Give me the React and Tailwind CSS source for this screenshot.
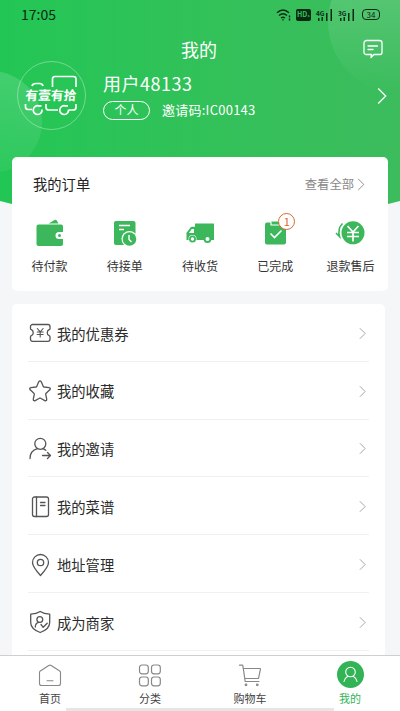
import React from 'react';

const icon = {
  fill: 'none',
  stroke: 'currentColor',
  strokeWidth: 1.3,
  strokeLinecap: 'round',
  strokeLinejoin: 'round',
};

const WalletIcon = () => (
  <svg width="28" height="28" viewBox="0 0 28 28" fill="#3cb75b">
    <path d="M12.500 4.500 19 .8q1-.5 1.600.5l1.900 3.200z" />
    <path d="M2.500 5.500H25a2 2 0 0 1 2 2V13h-4a3.500 3.500 0 0 0 0 7h4v5a2 2 0 0 1-2 2H2.500a2 2 0 0 1-2-2V7.500a2 2 0 0 1 2-2z" />
    <circle cx="23.500" cy="16.500" r="1.500" />
  </svg>
);

const OrderClockIcon = () => (
  <svg width="28" height="28" viewBox="0 0 28 28">
    <rect x="3" y="2" width="21.500" height="24" rx="2" fill="#3cb75b" />
    <path d="M8 6.500h11M8 10.500h5" stroke="#fff" strokeWidth="1.500" />
    <circle cx="18.500" cy="20" r="8" fill="#fff" />
    <circle cx="18.500" cy="20" r="6.800" fill="#3cb75b" />
    <path d="M18 16v4.500l2.500 2.500" fill="none" stroke="#fff" strokeWidth="1.400" />
  </svg>
);

const TruckIcon = () => (
  <svg width="30" height="28" viewBox="0 0 30 28">
    <path d="M10 4.500h18.500q.5 0 .5.500v15.500q0 .5-.5.500H1.500v-6.500H1l4.500-6q.5-.7 1.500-.7h3z" fill="#3cb75b" />
    <path d="M4 14 6.700 10H9v4z" fill="#fff" />
    <circle cx="7.500" cy="20" r="4" fill="#fff" />
    <circle cx="7.500" cy="20" r="2.600" fill="none" stroke="#3cb75b" strokeWidth="1.800" />
    <circle cx="22.500" cy="20" r="3.900" fill="#3cb75b" />
    <circle cx="22.500" cy="20" r="2" fill="#fff" />
  </svg>
);

const DoneIcon = () => (
  <svg width="28" height="28" viewBox="0 0 28 28">
    <rect x="4" y="3.500" width="21" height="22" rx="2" fill="#3cb75b" />
    <path d="M10 2.500V6h9V2.500" fill="#3cb75b" stroke="#fff" strokeWidth="1.200" />
    <path d="m9.500 14.500 4 4 7-7" fill="none" stroke="#fff" strokeWidth="1.600" />
  </svg>
);

const RefundIcon = () => (
  <svg width="30" height="28" viewBox="0 0 30 28">
    <circle cx="18" cy="13.800" r="11.500" fill="#3cb75b" />
    <path d="m12.500 7 5.500 6 5.500-6M12 13.500h12M12 17.500h12M18 13v9.500" fill="none" stroke="#fff" strokeWidth="1.700" />
    <path d="M7.500 4.500C4 8 3.300 13 4.500 17.500L1 14" fill="none" stroke="#3cb75b" strokeWidth="1.600" />
  </svg>
);

const CouponIcon = () => (
  <svg width="24" height="24" viewBox="0 0 24 24" {...icon}>
    <path d="M4.500 3.500H20a2 2 0 0 1 2 2v2.200q0 .8-.8 1c-2.600 1-2.600 5 0 6q.8.300.8 1v2.600a2 2 0 0 1-2 2H4.500a2 2 0 0 1-2-2v-2.600q0-.7.8-1c2.600-1 2.600-5 0-6q-.8-.2-.8-1V5.500a2 2 0 0 1 2-2z" />
    <path d="m9.300 7.500 2.900 3.300 2.900-3.300M9.200 11h6M9.200 13.500h6M12.200 11v5" strokeWidth="1.100" />
  </svg>
);

const StarIcon = () => (
  <svg width="24" height="24" viewBox="0 0 24 24" {...icon}>
    <path d="M10.700 2.800q1.300-2 2.600 0l2 4.600q.2.500.8.600l5 .6q2 .5.700 2.200l-3.700 3.500q-.5.500-.4 1l1 4.900q.1 2-1.900 1.400l-4.200-2.400q-.6-.3-1.200 0l-4.200 2.400q-2 .6-1.900-1.400l1-4.900q.1-.6-.4-1l-3.700-3.500q-1.300-1.700.7-2.200l5-.6q.6-.1.800-.6z" />
  </svg>
);

const InviteIcon = () => (
  <svg width="24" height="24" viewBox="0 0 24 24" {...icon}>
    <circle cx="12.300" cy="6.800" r="5.500" />
    <path d="M2 21.500C2 16 5.500 12.700 9.500 11.600M15 11.600q1.500.6 2.800 1.700M14.500 18.500h8M19.500 15.500l3 3-3 3" />
  </svg>
);

const RecipeIcon = () => (
  <svg width="24" height="24" viewBox="0 0 24 24" {...icon}>
    <rect x="4.500" y="2" width="16" height="19.500" rx="2" />
    <path d="M8.500 2v19.500M12.500 7.500H17M12.500 10.500H17" />
  </svg>
);

const PinIcon = () => (
  <svg width="24" height="24" viewBox="0 0 24 24" {...icon}>
    <path d="M12.500 22.500C8 17.500 4.500 13 4.500 9.500a8 8 0 0 1 16 0c0 3.500-3.500 8-8 13z" />
    <circle cx="12.500" cy="9.500" r="3.200" />
  </svg>
);

const MerchantIcon = () => (
  <svg width="24" height="24" viewBox="0 0 24 24" {...icon}>
    <path d="M12.200 1.500c2.500 1.700 6 2.600 9.500 2.700v8.300c0 5-4 8-9.500 10-5.500-2-9.500-5-9.500-10V4.200c3.300-.1 7-1 9.500-2.700z" />
    <circle cx="11.800" cy="9.500" r="2.900" />
    <path d="M7.300 17c0-3 1.500-4.200 3.300-4.700M13 14.500l2.200 2.800 4-4" />
  </svg>
);

const HomeIcon = () => (
  <svg width="24" height="24" viewBox="0 0 24 24" {...icon} strokeWidth="1.100">
    <path d="M1.500 8.500q0-1 .8-1.500l8.500-5.500q1.200-.8 2.400 0L21.700 7q.8.500.8 1.500V19.500a2 2 0 0 1-2 2h-17a2 2 0 0 1-2-2zM9 16.700h6" />
  </svg>
);

const CategoryIcon = () => (
  <svg width="24" height="24" viewBox="0 0 24 24" {...icon} strokeWidth="1.200">
    <rect x="1.500" y="1" width="8.800" height="8.800" rx="2.500" />
    <rect x="13.500" y="1" width="8.800" height="8.800" rx="2.500" />
    <rect x="1.500" y="13" width="8.800" height="8.800" rx="2.500" />
    <rect x="13.500" y="13" width="8.800" height="8.800" rx="2.500" />
  </svg>
);

const CartIcon = () => (
  <svg width="24" height="24" viewBox="0 0 24 24" {...icon} strokeWidth="1.200">
    <path d="M1.500 1.200h2.700q.6 0 .7.600l2.300 15.700H21M5.500 4.500h16.300q.8 0 .6.800L20.500 14.500H7" />
    <circle cx="8" cy="20.800" r=".8" />
    <circle cx="19.300" cy="20.800" r=".8" />
  </svg>
);

const MineIcon = () => (
  <svg width="27" height="27" viewBox="0 0 27 27">
    <circle cx="13.500" cy="13.500" r="13.500" fill="#32b456" />
    <g fill="none" stroke="#fff" strokeWidth="1.100" strokeLinecap="round">
      <circle cx="13.500" cy="11" r="4.800" />
      <path d="M7 20.500q.7-3.500 3.500-5M20 20.500q-.7-3.500-3.500-5" />
    </g>
  </svg>
);

const Chevron = ({ className }) => (
  <svg viewBox="0 0 8 14" fill="none" stroke="currentColor" className={className}>
    <path d="m1 1 6 6-6 6" />
  </svg>
);

const Signal = ({ label }) => (
  <div className="flex items-end">
    <div className="flex flex-col">
      <span className="text-[6.5px] leading-[8px] font-bold">{label}</span>
      <svg width="9" height="4" viewBox="0 0 9 4" fill="currentColor">
        <path d="M2 1h1.500v3H2zM5.500 0H7v4H5.500z" />
      </svg>
    </div>
    <svg width="8" height="12" viewBox="0 0 8 12" fill="currentColor">
      <path d="M1 4h1.500v8H1zM5.500 0H7v12H5.500z" />
    </svg>
  </div>
);

const StatusBar = () => (
  <div className="flex h-[29px] items-center justify-between pr-5 pl-[21px] text-[#0b2a14]">
    <span className="text-[14px]">17:05</span>
    <div className="flex items-center">
      <svg width="16" height="14" viewBox="0 0 16 14" fill="none" stroke="currentColor" strokeWidth="1.400">
        <path d="M1 4.800q6-5.500 12 0M3 7.500q4-3.500 8 0M5 10q2-1.500 4 0" />
        <path d="M7 11.300v1.200M13.500 7.500v2M13.500 10.500v2" />
      </svg>
      <span className="ml-1 flex h-[12px] w-[15px] items-center justify-center rounded-[2px] bg-[#0b2a14] text-[7px] leading-none font-bold text-[#30c15a]">HD₁</span>
      <div className="ml-[5px]"><Signal label="4G" /></div>
      <div className="ml-[5px]"><Signal label="3G" /></div>
      <span className="ml-[7px] flex h-[11px] w-[18px] items-center justify-center rounded-[4px] border border-[#0b2a14] text-[8px] leading-none">34</span>
    </div>
  </div>
);

const Avatar = () => (
  <div className="grid h-[69px] w-[69px] shrink-0 place-items-center rounded-full border border-white/35 text-white">
    <svg width="67" height="67" viewBox="0 0 67 67" fill="none" stroke="currentColor" strokeWidth="1.700">
      <path d="M14 24q.5-2.500 4-2.500h3.500q3 0 3.500 2.500M34.500 25v-8q0-2.500 2.500-2.500h18.500q2.500 0 2.500 2.500v8" />
      <path d="M7.500 42v3q0 2.500 3 2.500h3.500M28 42v3.500q0 2.500 3 2.500h9M51 48h4q3 0 3-2.500V42" />
      <path d="M24 47.500a4.400 4.400 0 1 1-3.500-3.700h3M50.500 47.500a4.400 4.400 0 1 1-3.500-3.700h3" />
      <text x="7.200" y="37.800" fontSize="12.800" fontWeight="700" fill="currentColor" stroke="none" transform="skewX(-4) translate(2.400 0)">有壹有拾</text>
    </svg>
  </div>
);

const orders = [
  { label: '待付款', Icon: WalletIcon },
  { label: '待接单', Icon: OrderClockIcon },
  { label: '待收货', Icon: TruckIcon },
  { label: '已完成', Icon: DoneIcon, badge: 1 },
  { label: '退款售后', Icon: RefundIcon },
];

const menu = [
  { label: '我的优惠券', Icon: CouponIcon },
  { label: '我的收藏', Icon: StarIcon },
  { label: '我的邀请', Icon: InviteIcon },
  { label: '我的菜谱', Icon: RecipeIcon },
  { label: '地址管理', Icon: PinIcon },
  { label: '成为商家', Icon: MerchantIcon },
];

const tabs = [
  { label: '首页', Icon: HomeIcon },
  { label: '分类', Icon: CategoryIcon },
  { label: '购物车', Icon: CartIcon },
  { label: '我的', Icon: MineIcon, active: true },
];

const App = () => {
  return (
    <div className="relative isolate flex h-[711px] w-[400px] flex-col overflow-hidden bg-[#f5f6f8] font-['Noto_Sans_CJK_SC',sans-serif] text-[#333]">
      {/* Header backdrop */}
      <div className="absolute inset-x-0 top-0 -z-10 h-[226px] overflow-hidden bg-linear-to-r from-[#22c655] to-[#3cbc5d] [clip-path:ellipse(437px_226px_at_50%_0)]">
        <div className="absolute top-[71px] -left-[60px] h-[102px] w-[102px] rounded-full bg-linear-to-b from-white/15 to-white/5" />
        <div className="absolute -top-[48px] left-[328px] h-[140px] w-[140px] rounded-full bg-linear-to-b from-white/20 to-white/0" />
      </div>

      <StatusBar />

      {/* Title */}
      <div className="grid h-[32px] grid-cols-[1fr_auto_1fr] items-center px-[17px] pt-[7px] text-white">
        <h1 className="col-start-2 -ml-[2px] text-[18px] leading-[26px]">我的</h1>
        <svg width="20" height="20" viewBox="0 0 20 20" className="justify-self-end" {...icon}>
          <path d="M3.500 1.500h13A2.500 2.500 0 0 1 19 4v9.500a2 2 0 0 1-2 2h-6L8 18.500l.5-3H3a2 2 0 0 1-2-2V4a2.500 2.500 0 0 1 2.500-2.500zM5 7h9.500M5 10.500h5" />
        </svg>
      </div>

      {/* User */}
      <div className="flex h-[69px] items-center pr-[13px] pl-[17px] text-white">
        <Avatar />
        <div className="ml-[17px] flex-1">
          <div className="text-[18px] leading-[25px] tracking-[0.5px]">用户48133</div>
          <div className="mt-[4px] flex items-center">
            <span className="flex h-[19px] w-[47px] items-center justify-center rounded-full border border-white text-[12px]">个人</span>
            <span className="ml-3 text-[13px] leading-5 tracking-[0.25px]">邀请码:IC00143</span>
          </div>
        </div>
        <Chevron className="h-[18px] w-[10px]" />
      </div>

      {/* Orders */}
      <section className="mx-3 mt-[27px] h-[134px] shrink-0 rounded-[5px] bg-white">
        <div className="flex h-[54px] items-center justify-between pr-[23px] pl-[21px]">
          <h2 className="text-[14.3px] text-[#222]">我的订单</h2>
          <span className="flex items-center gap-[3px] text-[12.3px] text-[#888]">
            查看全部
            <Chevron className="h-[13px] w-[8px]" />
          </span>
        </div>
        <div className="grid grid-cols-5 pt-[8px]">
          {orders.map(({ label, Icon, badge }) => (
            <div key={label} className="flex flex-col items-center gap-[10px]">
              <div className="relative">
                <Icon />
                {badge && (
                  <span className="absolute -top-[6px] left-[17px] flex h-[17px] w-[17px] items-center justify-center rounded-full border border-[#d8692f] bg-white text-[11px] text-[#d8692f]">
                    {badge}
                  </span>
                )}
              </div>
              <span className="text-[12px] leading-[18px]">{label}</span>
            </div>
          ))}
        </div>
      </section>

      {/* Menu */}
      <section className="mt-[13px] mr-[15px] ml-3 min-h-0 flex-1 overflow-hidden rounded-t-[5px] bg-white px-4">
        {menu.map(({ label, Icon }) => (
          <div key={label} className="flex h-[57.8px] items-center border-b border-[#f0f0f0] pt-[2px] pr-[3px] text-[#555]">
            <Icon />
            <span className="ml-[5px] flex-1 text-[14.3px] text-[#2b2b2b]">{label}</span>
            <Chevron className="h-[13px] w-[7px] text-[#999]" />
          </div>
        ))}
      </section>

      {/* Tab bar */}
      <nav className="h-[56px] shrink-0 border-t border-[#cfcfcf] bg-white">
        <div className="grid h-[52px] grid-cols-4">
          {tabs.map(({ label, Icon, active }) => (
            <div key={label} className={active ? 'flex flex-col items-center text-[#32b456]' : 'flex flex-col items-center text-[#888]'}>
              <div className="flex h-[34px] items-end pb-[2px]">
                <Icon />
              </div>
              <span className={active ? 'text-[11px] leading-[17px]' : 'text-[11px] leading-[17px] text-[#444]'}>{label}</span>
            </div>
          ))}
        </div>
        <div className="mx-auto h-[3px] w-[268px] bg-[#e5e5e5]" />
      </nav>
    </div>
  );
};

export default App;
